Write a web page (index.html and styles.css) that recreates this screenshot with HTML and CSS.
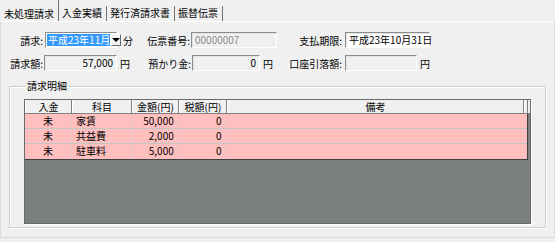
FILE: index.html
```html
<!DOCTYPE html>
<html lang="ja">
  <head>
    <meta charset="UTF-8" />
    <title>未処理請求</title>
    <link rel="stylesheet" href="styles.css">
  </head>
  <body>
    <div class="tabs">
      <div class="tab active">未処理請求</div>
      <div class="tab">入金実績</div>
      <div class="tab">発行済請求書</div>
      <div class="tab">振替伝票</div>
    </div>

    <div class="panel">
      <div class="row">
        <label class="lbl lbl-a">請求:</label>
        <div class="select">
          <span class="sel-text">平成23年11月</span>
          <span class="sel-btn"><span class="arrow"></span></span>
        </div>
        <span class="unit unit-bun">分</span>
        <label class="lbl lbl-b">伝票番号:</label>
        <div class="field off f-slip">00000007</div>
        <label class="lbl lbl-c">支払期限:</label>
        <div class="field f-due">平成23年10月31日</div>
      </div>

      <div class="row">
        <label class="lbl lbl-a">請求額:</label>
        <div class="field off num f-amount">57,000</div>
        <span class="unit">円</span>
        <label class="lbl lbl-b2">預かり金:</label>
        <div class="field off num f-deposit">0</div>
        <span class="unit">円</span>
        <label class="lbl lbl-c2">口座引落額:</label>
        <div class="field off f-debit"></div>
        <span class="unit">円</span>
      </div>

      <fieldset class="group">
        <legend>請求明細</legend>
        <div class="grid">
          <div class="grid-head">
            <div class="hc c1">入金</div>
            <div class="hc c2">科目</div>
            <div class="hc c3">金額(円)</div>
            <div class="hc c4">税額(円)</div>
            <div class="hc c5">備考</div>
            <div class="hc c6"></div>
          </div>
          <div class="grid-body">
            <div class="gr">
              <div class="gc c1 center">未</div>
              <div class="gc c2">家賃</div>
              <div class="gc c3 num">50,000</div>
              <div class="gc c4 num">0</div>
              <div class="gc c5"></div>
            </div>
            <div class="gr">
              <div class="gc c1 center">未</div>
              <div class="gc c2">共益費</div>
              <div class="gc c3 num">2,000</div>
              <div class="gc c4 num">0</div>
              <div class="gc c5"></div>
            </div>
            <div class="gr">
              <div class="gc c1 center">未</div>
              <div class="gc c2">駐車料</div>
              <div class="gc c3 num">5,000</div>
              <div class="gc c4 num">0</div>
              <div class="gc c5"></div>
            </div>
          </div>
        </div>
      </fieldset>
    </div>
  </body>
</html>
```

FILE: styles.css
```css
* {
  box-sizing: border-box;
}
body {
  margin: 0;
  width: 555px;
  height: 242px;
  background: #f0f0f0;
  font-family: "Noto Sans CJK JP", "DejaVu Sans", sans-serif;
  font-size: 10px;
  color: #000;
  overflow: hidden;
}

/* tabs */
.tabs {
  display: flex;
  height: 21px;
  align-items: flex-end;
}
.tab {
  height: 15px;
  line-height: 14px;
  padding: 0 4px 0 3px;
  border-right: 1px solid #707070;
  white-space: nowrap;
}
.tab.active {
  height: 21px;
  line-height: 27px;
  padding: 0 4px 0 4px;
}

.panel {
  height: 217px;
  border: 1px solid #dadada;
  border-top-color: #fff;
  padding-top: 10px;
}

/* form rows */
.row {
  display: flex;
  align-items: center;
  height: 16px;
  margin-bottom: 7px;
  white-space: nowrap;
}
.lbl {
  text-align: right;
  padding-right: 1px;
}
.lbl-a { width: 43px; }
.lbl-b { width: 58px; }
.lbl-c { width: 66px; margin-right: 2px; }
.lbl-b2 { width: 60px; }
.lbl-c2 { width: 68px; margin-right: 2px; }
.unit {
  width: 12px;
  margin-left: 3px;
}
.unit-bun {
  margin-left: 6px;
  width: 10px;
}

.field {
  height: 16px;
  line-height: 14px;
  padding: 0 3px;
  background: #fff;
  border: 1px solid;
  border-color: #8c8c8c #fff #fff #8c8c8c;
  box-shadow: inset 1px 1px 0 #e3e3e3;
}
.field.off {
  background: #f0f0f0;
}
.num {
  text-align: right;
}
.f-slip { width: 86px; color: #8c8c8c; }
.f-due { width: 85px; }
.f-amount { width: 73px; }
.f-deposit { width: 68px; }
.f-debit { width: 72px; }

.select {
  display: flex;
  width: 72px;
  height: 16px;
  margin-left: 1px;
  border: 1px solid;
  border-color: #8c8c8c #fff #fff #8c8c8c;
  background: #fff;
  padding: 1px;
}
.sel-text {
  flex: 1;
  background: #3399ff;
  color: #fff;
  line-height: 12px;
  padding-left: 1px;
  margin-right: 1px;
}
.sel-btn {
  width: 13px;
  display: flex;
  align-items: center;
  justify-content: center;
  background: #f0f0f0;
  border: 1px solid;
  border-color: #fff #696969 #696969 #fff;
}
.arrow {
  width: 0;
  height: 0;
  border-left: 4px solid transparent;
  border-right: 4px solid transparent;
  border-top: 4px solid #000;
}

/* group box */
.group {
  margin: 10px 8px 0 8px;
  height: 147px;
  padding: 8px 13px 0 14px;
  border: 1px solid #d0d0d0;
  box-shadow: inset 1px 1px 0 #fff, 1px 1px 0 #fff;
}
.group legend {
  padding: 0 1px;
  margin-left: 2px;
  line-height: 10px;
}

.grid {
  width: 507px;
  height: 125px;
  background: #7b7f7e;
  border: 1px solid #6a6a6a;
  box-shadow: 1px 1px 0 #fff;
}
.grid-head {
  display: flex;
  height: 14px;
  line-height: 13px;
  background: #f0f0f0;
  border-bottom: 1px solid #808080;
}
.hc {
  text-align: center;
  border-right: 1px solid #808080;
  border-left: 1px solid #fff;
}
.c1 { width: 47px; }
.c2 { width: 60px; }
.c3 { width: 47px; }
.c4 { width: 48px; }
.c5 { width: 297px; }
.c6 { width: 4px; }

.grid-body {
  width: 503px;
  border-right: 1px solid #404040;
  border-bottom: 1px solid #404040;
}
.gr {
  display: flex;
  height: 15px;
  line-height: 14px;
  background: #ffbfbf;
  border-bottom: 1px solid #c4c4c4;
}
.gr:last-child {
  border-bottom: none;
}
.gc {
  padding: 0 4px;
  border-right: 1px solid #e6c4c4;
}
.gc.c5 {
  width: 301px;
  border-right: none;
}
.gc.center {
  text-align: center;
}
```
